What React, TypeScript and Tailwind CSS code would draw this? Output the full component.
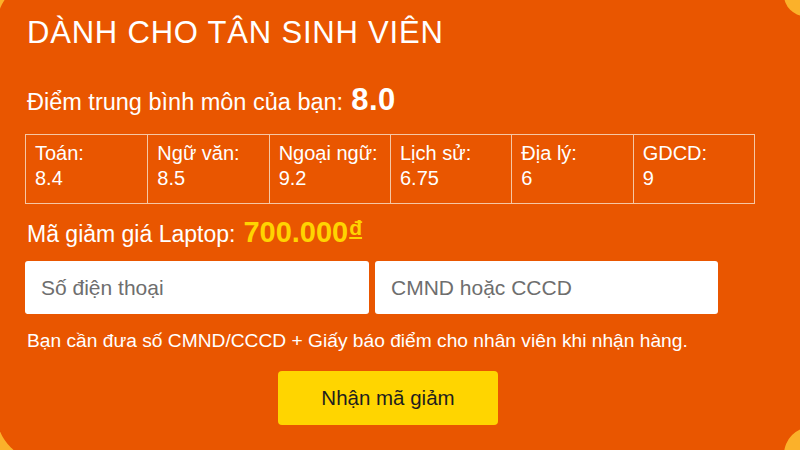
import React from "react";

const scores = [
  { label: "Toán:", value: "8.4" },
  { label: "Ngữ văn:", value: "8.5" },
  { label: "Ngoại ngữ:", value: "9.2" },
  { label: "Lịch sử:", value: "6.75" },
  { label: "Địa lý:", value: "6" },
  { label: "GDCD:", value: "9" },
];

export default function App() {
  return (
    <div
      className="relative w-[800px] h-[450px] overflow-hidden bg-[#fbb12a]"
      style={{ fontFamily: '"Liberation Sans", Arial, sans-serif' }}
    >
      <div className="w-[840px] h-[484px] -mt-[22px] -ml-[4px] rounded-[50px] bg-[#e95600] pt-[37px] pl-[31px] text-white">
        <h1 className="text-[31px] leading-[36px] tracking-[0.8px]">DÀNH CHO TÂN SINH VIÊN</h1>

        <div className="mt-[32px] flex items-baseline text-[23.5px] leading-[34px]">
          <span>Điểm trung bình môn của bạn:</span>
          <span className="ml-[8px] text-[31px] font-bold tracking-[0.5px]">8.0</span>
        </div>

        <div className="mt-[15px] -ml-[2px] grid w-[730px] grid-cols-6 border border-[#f6c7a4]">
          {scores.map((s, i) => (
            <div
              key={s.label}
              className={`h-[68px] pl-[9px] pt-[6px] text-[20px] leading-[25px] ${i > 0 ? "border-l border-[#f6c7a4]" : ""}`}
            >
              <div>{s.label}</div>
              <div>{s.value}</div>
            </div>
          ))}
        </div>

        <div className="mt-[12px] flex items-baseline text-[23px] leading-[32px]">
          <span>Mã giảm giá Laptop:</span>
          <span className="ml-[8px] text-[29px] font-bold text-[#ffd400]">
            700.000<span className="ml-[1px] text-[21px] underline align-top leading-[24px]">đ</span>
          </span>
        </div>

        <div className="mt-[11px] -ml-[2px] flex gap-[6px]">
          <input
            placeholder="Số điện thoại"
            className="h-[53px] w-[344px] rounded-[3px] bg-white pl-[16px] text-[21px] text-[#333] outline-none placeholder:text-[#6e6e6e]"
          />
          <input
            placeholder="CMND hoặc CCCD"
            className="h-[53px] w-[343px] rounded-[3px] bg-white pl-[16px] text-[21px] text-[#333] outline-none placeholder:text-[#6e6e6e]"
          />
        </div>

        <p className="mt-[15px] text-[19.2px] leading-[24px]">
          Bạn cần đưa số CMND/CCCD + Giấy báo điểm cho nhân viên khi nhận hàng.
        </p>

        <div className="mt-[18px] -ml-[4px] w-[730px] flex justify-center">
          <button className="h-[54px] w-[220px] rounded-[4px] bg-[#ffd500] text-[20.5px] text-[#1e1e1e]">
            Nhận mã giảm
          </button>
        </div>
      </div>

      <div className="absolute -right-[26px] -top-[26px] h-[42px] w-[42px] rounded-full bg-[#fbb12a]" />
      <div className="absolute -right-[39px] -bottom-[32px] h-[55px] w-[55px] rounded-full bg-[#fbb12a]" />
    </div>
  );
}
